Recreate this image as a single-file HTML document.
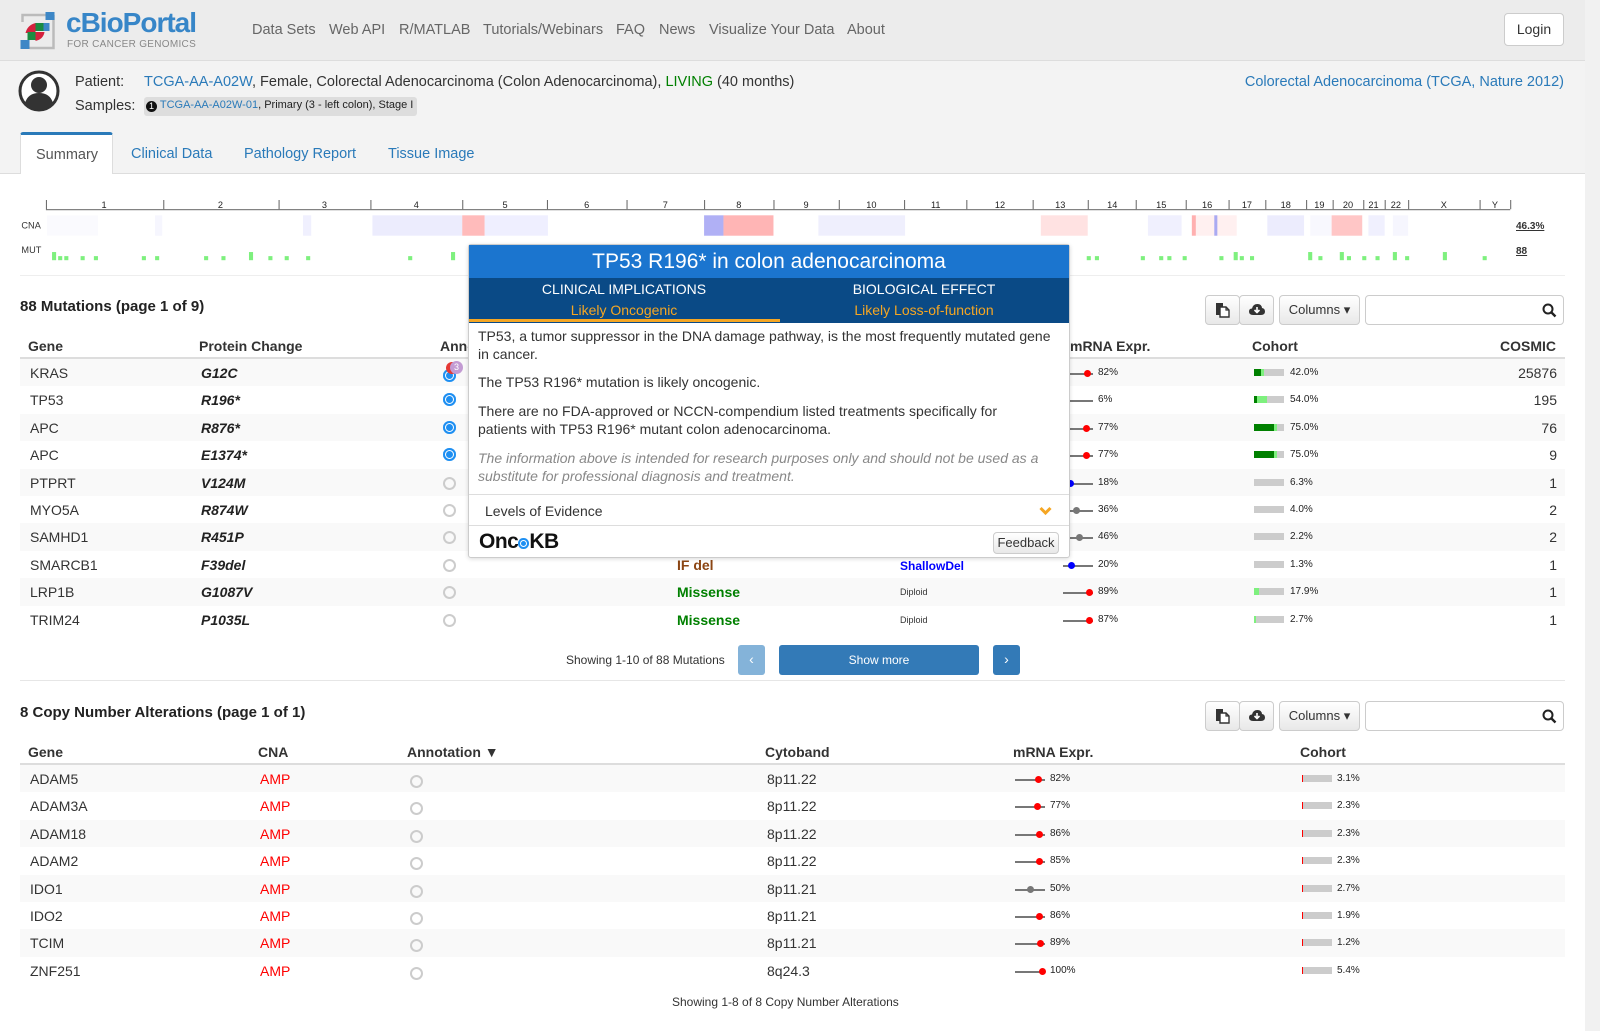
<!DOCTYPE html>
<html><head><meta charset="utf-8"><style>
*{box-sizing:border-box}
body{margin:0;width:1600px;height:1031px;overflow:hidden;font-family:"Liberation Sans",Arial,sans-serif;font-size:14px;color:#333;background:#fff;position:relative}
.a{position:absolute;white-space:nowrap}
a,.lk{color:#2a7ab9;text-decoration:none}
.hdr{left:0;top:0;width:1585px;height:61px;background:#ececec;border-bottom:1px solid #ddd}
.nav{top:22px;font-size:14.5px;color:#666}
.pat{left:0;top:61px;width:1585px;height:112px;background:#f3f3f3}
.tabline{left:0;top:173px;width:1585px;height:1px;background:#ddd}
.sb{left:1585px;top:0;width:15px;height:1031px;background:#f1f1f1}
.tick{position:absolute;top:196px;width:1px;height:9px;background:#666}
.cl{position:absolute;top:196px;font-size:9px;color:#222;transform:translateX(-50%)}
.cn{position:absolute;top:211px;height:20px}
.mb{position:absolute;background:#7ef07e;width:4px}
h3{margin:0;font-size:15px;font-weight:bold;color:#222}
.th{font-weight:bold;font-size:14px;color:#333}
.row{position:absolute;left:20px;width:1545px;height:27.4px}
.row.s{background:#f9f9f9}
.row .c{position:absolute;top:6px;white-space:nowrap}
.pc{font-weight:bold;font-style:italic;color:#222}
.circ{position:absolute;width:13px;height:13px;border:2px solid #ccc;border-radius:50%}
.onc{position:absolute;width:13px;height:13px;border-radius:50%;background:#1e8ff2;box-shadow:inset 0 0 0 2px #1e8ff2,inset 0 0 0 3px #fff,inset 0 0 0 5px #1e8ff2}
.ml{position:absolute;height:2px;background:#777;width:30px}
.md{position:absolute;width:7px;height:7px;border-radius:50%}
.mt{position:absolute;font-size:10px;color:#222}
.cb{position:absolute;width:30px;height:7px;background:#ccc}
.ct{position:absolute;font-size:10px;color:#222}
.btn{position:absolute;border:1px solid #ccc;border-radius:4px;background:linear-gradient(#fff,#e8e8e8);height:30px}
.srch{position:absolute;border:1px solid #ccc;border-radius:4px;background:#fff;height:30px;width:199px}
.mis{color:#008000;font-weight:bold}
</style></head><body>

<div class="a hdr"></div>
<svg class="a" style="left:19px;top:11px" width="39" height="40" viewBox="0 0 38 40">
<path d="M3 11 V4 H34" fill="none" stroke="#bbb" stroke-width="2.5"/>
<path d="M34 4 V37 H10" fill="none" stroke="#bbb" stroke-width="2.5"/>
<rect x="26" y="1" width="9" height="8" fill="#3d87c6"/>
<path d="M6 22 Q8 14 16 12 V22 Z" fill="#d4213d"/>
<rect x="16" y="12" width="8" height="8" fill="#1a8c42"/>
<rect x="24" y="12" width="6" height="8" fill="#3d87c6"/>
<rect x="8" y="21" width="8" height="8" fill="#1a8c42"/>
<path d="M16 21 H25 Q24 28 16 30 Z" fill="#d4213d"/>
<rect x="1" y="29" width="9" height="9" fill="#3d87c6"/>
</svg>
<div class="a" style="left:66px;top:7px;font-size:28px;font-weight:bold;color:#3786c8;letter-spacing:-1px">cBioPortal</div>
<div class="a" style="left:67px;top:39px;font-size:10px;color:#888;letter-spacing:.3px">FOR CANCER GENOMICS</div>
<div class="a nav" style="left:252px">Data Sets</div>
<div class="a nav" style="left:329px">Web API</div>
<div class="a nav" style="left:399px">R/MATLAB</div>
<div class="a nav" style="left:483px">Tutorials/Webinars</div>
<div class="a nav" style="left:616px">FAQ</div>
<div class="a nav" style="left:659px">News</div>
<div class="a nav" style="left:709px">Visualize Your Data</div>
<div class="a nav" style="left:847px">About</div>
<div class="a btn" style="left:1504px;top:13px;width:60px;height:33px;font-size:14px;text-align:center;line-height:31px;background:#fff">Login</div>

<div class="a pat"></div>
<svg class="a" style="left:18px;top:70px" width="42" height="42" viewBox="0 0 42 42"><circle cx="21" cy="21" r="19" fill="#fff" stroke="#333" stroke-width="3"/><circle cx="21" cy="15" r="8" fill="#333"/><path d="M7 33 Q10 23 21 23 Q32 23 35 33 Q29 40 21 40 Q13 40 7 33Z" fill="#333"/></svg>
<div class="a" style="left:75px;top:74px;font-size:14.5px">Patient:</div>
<div class="a" style="left:144px;top:74px;font-size:14.5px"><span class="lk">TCGA-AA-A02W</span>, Female, Colorectal Adenocarcinoma (Colon Adenocarcinoma), <span style="color:#008000">LIVING</span> (40 months)</div>
<div class="a" style="left:75px;top:98px;font-size:14.5px">Samples:</div>
<div class="a" style="left:144px;top:97px;height:19px;background:#ddd;border-radius:3px;padding:2px 4px 0 2px;font-size:11px;color:#222"><span style="display:inline-block;width:11px;height:11px;border-radius:50%;background:#111;color:#fff;font-size:9px;text-align:center;line-height:11px;vertical-align:-1px">1</span> <span class="lk">TCGA-AA-A02W-01</span>, Primary (3 - left colon), Stage I</div>
<div class="a lk" style="right:36px;top:74px;font-size:14.5px">Colorectal Adenocarcinoma (TCGA, Nature 2012)</div>

<div class="a tabline"></div>
<div class="a" style="left:20px;top:132px;width:93px;height:42px;background:#fff;border:1px solid #ddd;border-top:3px solid #2a7ab9;border-bottom:none;border-radius:3px 3px 0 0"></div>
<div class="a" style="left:36px;top:147px;font-size:14.5px;color:#555">Summary</div>
<div class="a lk" style="left:131px;top:146px;font-size:14.5px">Clinical Data</div>
<div class="a lk" style="left:244px;top:146px;font-size:14.5px">Pathology Report</div>
<div class="a lk" style="left:388px;top:146px;font-size:14.5px">Tissue Image</div>

<!-- genome -->
<div style="position:absolute;left:0;top:0;width:1568px;height:300px;transform:scale(1.0204);transform-origin:0 0">
<div class="a" style="left:45px;top:205px;width:1435px;height:1px;background:#666"></div>
<div class="tick" style="left:45px"></div><div class="tick" style="left:160px"></div><div class="tick" style="left:273px"></div><div class="tick" style="left:363px"></div><div class="tick" style="left:453px"></div><div class="tick" style="left:536px"></div><div class="tick" style="left:614px"></div><div class="tick" style="left:690px"></div><div class="tick" style="left:758px"></div><div class="tick" style="left:822px"></div><div class="tick" style="left:886px"></div><div class="tick" style="left:947px"></div><div class="tick" style="left:1012px"></div><div class="tick" style="left:1066px"></div><div class="tick" style="left:1113px"></div><div class="tick" style="left:1162px"></div><div class="tick" style="left:1204px"></div><div class="tick" style="left:1240px"></div><div class="tick" style="left:1280px"></div><div class="tick" style="left:1306px"></div><div class="tick" style="left:1336px"></div><div class="tick" style="left:1357px"></div><div class="tick" style="left:1380px"></div><div class="tick" style="left:1450px"></div><div class="tick" style="left:1480px"></div>
<div class="cl" style="left:102px">1</div><div class="cl" style="left:216px">2</div><div class="cl" style="left:318px">3</div><div class="cl" style="left:408px">4</div><div class="cl" style="left:495px">5</div><div class="cl" style="left:575px">6</div><div class="cl" style="left:652px">7</div><div class="cl" style="left:724px">8</div><div class="cl" style="left:790px">9</div><div class="cl" style="left:854px">10</div><div class="cl" style="left:917px">11</div><div class="cl" style="left:980px">12</div><div class="cl" style="left:1039px">13</div><div class="cl" style="left:1090px">14</div><div class="cl" style="left:1138px">15</div><div class="cl" style="left:1183px">16</div><div class="cl" style="left:1222px">17</div><div class="cl" style="left:1260px">18</div><div class="cl" style="left:1293px">19</div><div class="cl" style="left:1321px">20</div><div class="cl" style="left:1346px">21</div><div class="cl" style="left:1368px">22</div><div class="cl" style="left:1415px">X</div><div class="cl" style="left:1465px">Y</div>
<div class="a" style="left:21px;top:216px;font-size:9px">CNA</div>
<div class="a" style="left:21px;top:240px;font-size:9px">MUT</div>
<div class="cn" style="left:46px;width:50px;background:#fafafe"></div>
<div class="cn" style="left:152px;width:7px;background:#f6f6fe"></div>
<div class="cn" style="left:297px;width:8px;background:#f0f0fe"></div>
<div class="cn" style="left:365px;width:88px;background:#ececfd"></div>
<div class="cn" style="left:453px;width:22px;background:#ffbbbb"></div>
<div class="cn" style="left:475px;width:62px;background:#efefff"></div>
<div class="cn" style="left:690px;width:19px;background:#b0b0f5"></div>
<div class="cn" style="left:709px;width:49px;background:#ffb5b5"></div>
<div class="cn" style="left:802px;width:85px;background:#efeffd"></div>
<div class="cn" style="left:1020px;width:46px;background:#ffe2e2"></div>
<div class="cn" style="left:1125px;width:33px;background:#f0f0fe"></div>
<div class="cn" style="left:1168px;width:4px;background:#ffb0b0"></div>
<div class="cn" style="left:1172px;width:40px;background:#fff0f0"></div>
<div class="cn" style="left:1190px;width:3px;background:#aaaaf2"></div>
<div class="cn" style="left:1242px;width:36px;background:#ececfd"></div>
<div class="cn" style="left:1284px;width:21px;background:#f8f8fe"></div>
<div class="cn" style="left:1305px;width:30px;background:#ffc6c6"></div>
<div class="cn" style="left:1341px;width:16px;background:#f0f0fe"></div>
<div class="cn" style="left:1365px;width:15px;background:#f6f6fe"></div>
<div class="mb" style="left:51px;top:247px;height:8px"></div><div class="mb" style="left:57px;top:251px;height:4px"></div><div class="mb" style="left:63px;top:251px;height:4px"></div><div class="mb" style="left:79px;top:251px;height:4px"></div><div class="mb" style="left:92px;top:251px;height:4px"></div><div class="mb" style="left:139px;top:251px;height:4px"></div><div class="mb" style="left:152px;top:251px;height:4px"></div><div class="mb" style="left:200px;top:251px;height:4px"></div><div class="mb" style="left:217px;top:251px;height:4px"></div><div class="mb" style="left:244px;top:247px;height:8px"></div><div class="mb" style="left:263px;top:251px;height:4px"></div><div class="mb" style="left:279px;top:251px;height:4px"></div><div class="mb" style="left:300px;top:251px;height:4px"></div><div class="mb" style="left:400px;top:251px;height:4px"></div><div class="mb" style="left:442px;top:247px;height:8px"></div>
<div class="mb" style="left:1065px;top:251px;height:4px"></div><div class="mb" style="left:1073px;top:251px;height:4px"></div><div class="mb" style="left:1118px;top:251px;height:4px"></div><div class="mb" style="left:1136px;top:251px;height:4px"></div><div class="mb" style="left:1144px;top:251px;height:4px"></div><div class="mb" style="left:1159px;top:251px;height:4px"></div><div class="mb" style="left:1195px;top:251px;height:4px"></div><div class="mb" style="left:1209px;top:247px;height:8px"></div><div class="mb" style="left:1215px;top:251px;height:4px"></div><div class="mb" style="left:1225px;top:251px;height:4px"></div><div class="mb" style="left:1282px;top:247px;height:8px"></div><div class="mb" style="left:1292px;top:251px;height:4px"></div><div class="mb" style="left:1313px;top:247px;height:8px"></div><div class="mb" style="left:1320px;top:251px;height:4px"></div><div class="mb" style="left:1335px;top:251px;height:4px"></div><div class="mb" style="left:1348px;top:251px;height:4px"></div><div class="mb" style="left:1365px;top:247px;height:8px"></div><div class="mb" style="left:1377px;top:251px;height:4px"></div><div class="mb" style="left:1414px;top:247px;height:8px"></div><div class="mb" style="left:1453px;top:251px;height:4px"></div>
</div>
<div class="a" style="left:1516px;top:221px;font-size:10px;font-weight:bold;text-decoration:underline">46.3%</div>
<div class="a" style="left:1516px;top:246px;font-size:10px;font-weight:bold;text-decoration:underline">88</div>
<div class="a" style="left:20px;top:275px;width:1545px;height:1px;background:#eee"></div>

<!-- mutations -->
<div class="a" style="left:20px;top:298px"><h3>88 Mutations (page 1 of 9)</h3></div>
<div class="btn" style="left:1205px;top:295px;width:35px"></div><div class="btn" style="left:1239px;top:295px;width:35px"></div>
<svg class="a" style="left:1215px;top:302px" width="15" height="16" viewBox="0 0 15 16"><path d="M1 1 H8 V13 H1Z" fill="#333"/><path d="M5 5 H11 L14 8 V15 H5Z" fill="#fff" stroke="#333" stroke-width="1.4"/><path d="M11 5 V8 H14" fill="none" stroke="#333" stroke-width="1.2"/></svg>
<svg class="a" style="left:1249px;top:303px" width="16" height="13" viewBox="0 0 16 13"><path d="M4 12 Q0 12 0 8.5 Q0 5.5 3 5.5 Q4 1 8.5 1 Q12.5 1 13 5 Q16 5.5 16 8.5 Q16 12 12 12Z" fill="#333"/><path d="M8 4 V9 M5.5 7 L8 9.5 L10.5 7" stroke="#fff" stroke-width="1.6" fill="none"/></svg>
<div class="btn" style="left:1279px;top:295px;width:81px;text-align:center;line-height:28px;font-size:13px">Columns &#9662;</div>
<div class="srch" style="left:1365px;top:295px"></div>
<svg class="a" style="left:1542px;top:303px" width="15" height="15" viewBox="0 0 15 15"><circle cx="6" cy="6" r="4.5" fill="none" stroke="#222" stroke-width="2"/><path d="M9.5 9.5 L13.5 13.5" stroke="#222" stroke-width="2.4"/></svg>

<div class="a th" style="left:28px;top:338px">Gene</div>
<div class="a th" style="left:199px;top:338px">Protein Change</div>
<div class="a th" style="left:440px;top:338px">Anno</div>
<div class="a th" style="left:1070px;top:338px">mRNA Expr.</div>
<div class="a th" style="left:1252px;top:338px">Cohort</div>
<div class="a th" style="right:44px;top:338px">COSMIC</div>
<div class="a" style="left:20px;top:357px;width:1545px;height:2px;background:#ddd"></div>

<div style="position:absolute;left:0;top:359px">
<div class="row s" style="top:0"><div class="c" style="left:10px">KRAS</div><div class="c pc" style="left:181px">G12C</div><div class="onc" style="left:423px;top:10px"></div><div style="position:absolute;left:426px;top:3px;width:12px;height:12px;border-radius:50%;background:#e53935"></div><div style="position:absolute;left:430px;top:2px;width:13px;height:13px;border-radius:50%;background:#c39bd3;color:#fff;font-size:9px;text-align:center;line-height:13px">3</div><div class="ml" style="left:1043px;top:14px"></div><div class="md" style="left:1064px;top:11px;background:red"></div><div class="mt" style="left:1078px;top:8px">82%</div><div class="cb" style="left:1234px;top:10px"></div><div style="position:absolute;left:1234px;top:10px;width:7px;height:7px;background:#008000"></div><div style="position:absolute;left:1241px;top:10px;width:3px;height:7px;background:#7ef07e"></div><div class="ct" style="left:1270px;top:8px">42.0%</div><div class="c" style="right:8px;left:auto">25876</div></div>
<div class="row" style="top:27.4px"><div class="c" style="left:10px">TP53</div><div class="c pc" style="left:181px">R196*</div><div class="onc" style="left:423px;top:7px"></div><div class="ml" style="left:1043px;top:14px"></div><div class="md" style="left:1043px;top:11px;background:#00f"></div><div class="mt" style="left:1078px;top:8px">6%</div><div class="cb" style="left:1234px;top:10px"></div><div style="position:absolute;left:1234px;top:10px;width:3px;height:7px;background:#008000"></div><div style="position:absolute;left:1237px;top:10px;width:10px;height:7px;background:#7ef07e"></div><div class="ct" style="left:1270px;top:8px">54.0%</div><div class="c" style="right:8px;left:auto">195</div></div>
<div class="row s" style="top:54.8px"><div class="c" style="left:10px">APC</div><div class="c pc" style="left:181px">R876*</div><div class="onc" style="left:423px;top:7px"></div><div class="ml" style="left:1043px;top:14px"></div><div class="md" style="left:1063px;top:11px;background:red"></div><div class="mt" style="left:1078px;top:8px">77%</div><div class="cb" style="left:1234px;top:10px"></div><div style="position:absolute;left:1234px;top:10px;width:20px;height:7px;background:#008000"></div><div style="position:absolute;left:1254px;top:10px;width:3px;height:7px;background:#7ef07e"></div><div class="ct" style="left:1270px;top:8px">75.0%</div><div class="c" style="right:8px;left:auto">76</div></div>
<div class="row" style="top:82.2px"><div class="c" style="left:10px">APC</div><div class="c pc" style="left:181px">E1374*</div><div class="onc" style="left:423px;top:7px"></div><div class="ml" style="left:1043px;top:14px"></div><div class="md" style="left:1063px;top:11px;background:red"></div><div class="mt" style="left:1078px;top:8px">77%</div><div class="cb" style="left:1234px;top:10px"></div><div style="position:absolute;left:1234px;top:10px;width:20px;height:7px;background:#008000"></div><div style="position:absolute;left:1254px;top:10px;width:3px;height:7px;background:#7ef07e"></div><div class="ct" style="left:1270px;top:8px">75.0%</div><div class="c" style="right:8px;left:auto">9</div></div>
<div class="row s" style="top:109.6px"><div class="c" style="left:10px">PTPRT</div><div class="c pc" style="left:181px">V124M</div><div class="circ" style="left:423px;top:8px"></div><div class="ml" style="left:1043px;top:14px"></div><div class="md" style="left:1047px;top:11px;background:#00f"></div><div class="mt" style="left:1078px;top:8px">18%</div><div class="cb" style="left:1234px;top:10px"></div><div class="ct" style="left:1270px;top:8px">6.3%</div><div class="c" style="right:8px;left:auto">1</div></div>
<div class="row" style="top:137px"><div class="c" style="left:10px">MYO5A</div><div class="c pc" style="left:181px">R874W</div><div class="circ" style="left:423px;top:8px"></div><div class="ml" style="left:1043px;top:14px"></div><div class="md" style="left:1053px;top:11px;background:#777"></div><div class="mt" style="left:1078px;top:8px">36%</div><div class="cb" style="left:1234px;top:10px"></div><div class="ct" style="left:1270px;top:8px">4.0%</div><div class="c" style="right:8px;left:auto">2</div></div>
<div class="row s" style="top:164.4px"><div class="c" style="left:10px">SAMHD1</div><div class="c pc" style="left:181px">R451P</div><div class="circ" style="left:423px;top:8px"></div><div class="ml" style="left:1043px;top:14px"></div><div class="md" style="left:1056px;top:11px;background:#777"></div><div class="mt" style="left:1078px;top:8px">46%</div><div class="cb" style="left:1234px;top:10px"></div><div class="ct" style="left:1270px;top:8px">2.2%</div><div class="c" style="right:8px;left:auto">2</div></div>
<div class="row" style="top:191.8px"><div class="c" style="left:10px">SMARCB1</div><div class="c pc" style="left:181px">F39del</div><div class="circ" style="left:423px;top:8px"></div><div class="c" style="left:657px;color:#8b4513;font-weight:bold">IF del</div><div class="c" style="left:880px;top:8px;color:#00f;font-weight:bold;font-size:12px">ShallowDel</div><div class="ml" style="left:1043px;top:14px"></div><div class="md" style="left:1048px;top:11px;background:#00f"></div><div class="mt" style="left:1078px;top:8px">20%</div><div class="cb" style="left:1234px;top:10px"></div><div class="ct" style="left:1270px;top:8px">1.3%</div><div class="c" style="right:8px;left:auto">1</div></div>
<div class="row s" style="top:219.2px"><div class="c" style="left:10px">LRP1B</div><div class="c pc" style="left:181px">G1087V</div><div class="circ" style="left:423px;top:8px"></div><div class="c mis" style="left:657px">Missense</div><div class="c" style="left:880px;top:9px;font-size:9px">Diploid</div><div class="ml" style="left:1043px;top:14px"></div><div class="md" style="left:1066px;top:11px;background:red"></div><div class="mt" style="left:1078px;top:8px">89%</div><div class="cb" style="left:1234px;top:10px"></div><div style="position:absolute;left:1234px;top:10px;width:5px;height:7px;background:#7ef07e"></div><div class="ct" style="left:1270px;top:8px">17.9%</div><div class="c" style="right:8px;left:auto">1</div></div>
<div class="row" style="top:246.6px"><div class="c" style="left:10px">TRIM24</div><div class="c pc" style="left:181px">P1035L</div><div class="circ" style="left:423px;top:8px"></div><div class="c mis" style="left:657px">Missense</div><div class="c" style="left:880px;top:9px;font-size:9px">Diploid</div><div class="ml" style="left:1043px;top:14px"></div><div class="md" style="left:1066px;top:11px;background:red"></div><div class="mt" style="left:1078px;top:8px">87%</div><div class="cb" style="left:1234px;top:10px"></div><div style="position:absolute;left:1234px;top:10px;width:2px;height:7px;background:#7ef07e"></div><div class="ct" style="left:1270px;top:8px">2.7%</div><div class="c" style="right:8px;left:auto">1</div></div>
</div>

<div class="a" style="left:566px;top:653px;font-size:12px;color:#333">Showing 1-10 of 88 Mutations</div>
<div class="a" style="left:738px;top:645px;width:27px;height:30px;background:#84b3d9;border-radius:3px;color:#fff;text-align:center;line-height:29px">&#8249;</div>
<div class="a" style="left:779px;top:645px;width:200px;height:30px;background:#337ab7;border-radius:3px;color:#fff;text-align:center;line-height:30px;font-size:12px">Show more</div>
<div class="a" style="left:993px;top:645px;width:27px;height:30px;background:#337ab7;border-radius:3px;color:#fff;text-align:center;line-height:29px">&#8250;</div>
<div class="a" style="left:20px;top:680px;width:1545px;height:1px;background:#e6e6e6"></div>

<!-- CNA -->
<div class="a" style="left:20px;top:704px"><h3>8 Copy Number Alterations (page 1 of 1)</h3></div>
<div class="btn" style="left:1205px;top:701px;width:35px"></div><div class="btn" style="left:1239px;top:701px;width:35px"></div>
<svg class="a" style="left:1215px;top:708px" width="15" height="16" viewBox="0 0 15 16"><path d="M1 1 H8 V13 H1Z" fill="#333"/><path d="M5 5 H11 L14 8 V15 H5Z" fill="#fff" stroke="#333" stroke-width="1.4"/><path d="M11 5 V8 H14" fill="none" stroke="#333" stroke-width="1.2"/></svg>
<svg class="a" style="left:1249px;top:709px" width="16" height="13" viewBox="0 0 16 13"><path d="M4 12 Q0 12 0 8.5 Q0 5.5 3 5.5 Q4 1 8.5 1 Q12.5 1 13 5 Q16 5.5 16 8.5 Q16 12 12 12Z" fill="#333"/><path d="M8 4 V9 M5.5 7 L8 9.5 L10.5 7" stroke="#fff" stroke-width="1.6" fill="none"/></svg>
<div class="btn" style="left:1279px;top:701px;width:81px;text-align:center;line-height:28px;font-size:13px">Columns &#9662;</div>
<div class="srch" style="left:1365px;top:701px"></div>
<svg class="a" style="left:1542px;top:709px" width="15" height="15" viewBox="0 0 15 15"><circle cx="6" cy="6" r="4.5" fill="none" stroke="#222" stroke-width="2"/><path d="M9.5 9.5 L13.5 13.5" stroke="#222" stroke-width="2.4"/></svg>

<div class="a th" style="left:28px;top:744px">Gene</div>
<div class="a th" style="left:258px;top:744px">CNA</div>
<div class="a th" style="left:407px;top:744px">Annotation &#9660;</div>
<div class="a th" style="left:765px;top:744px">Cytoband</div>
<div class="a th" style="left:1013px;top:744px">mRNA Expr.</div>
<div class="a th" style="left:1300px;top:744px">Cohort</div>
<div class="a" style="left:20px;top:763px;width:1545px;height:2px;background:#ddd"></div>

<div style="position:absolute;left:0;top:765px">
<div class="row s" style="top:0"><div class="c" style="left:10px">ADAM5</div><div class="c" style="left:240px;color:red">AMP</div><div class="circ" style="left:390px;top:10px"></div><div class="c" style="left:747px">8p11.22</div><div class="ml" style="left:995px;top:14px"></div><div class="md" style="left:1015px;top:11px;background:red"></div><div class="mt" style="left:1030px;top:8px">82%</div><div class="cb" style="left:1282px;top:10px"></div><div style="position:absolute;left:1282px;top:10px;width:1px;height:7px;background:red"></div><div class="ct" style="left:1317px;top:8px">3.1%</div></div>
<div class="row" style="top:27.4px"><div class="c" style="left:10px">ADAM3A</div><div class="c" style="left:240px;color:red">AMP</div><div class="circ" style="left:390px;top:10px"></div><div class="c" style="left:747px">8p11.22</div><div class="ml" style="left:995px;top:14px"></div><div class="md" style="left:1014px;top:11px;background:red"></div><div class="mt" style="left:1030px;top:8px">77%</div><div class="cb" style="left:1282px;top:10px"></div><div style="position:absolute;left:1282px;top:10px;width:1px;height:7px;background:red"></div><div class="ct" style="left:1317px;top:8px">2.3%</div></div>
<div class="row s" style="top:54.8px"><div class="c" style="left:10px">ADAM18</div><div class="c" style="left:240px;color:red">AMP</div><div class="circ" style="left:390px;top:10px"></div><div class="c" style="left:747px">8p11.22</div><div class="ml" style="left:995px;top:14px"></div><div class="md" style="left:1016px;top:11px;background:red"></div><div class="mt" style="left:1030px;top:8px">86%</div><div class="cb" style="left:1282px;top:10px"></div><div style="position:absolute;left:1282px;top:10px;width:1px;height:7px;background:red"></div><div class="ct" style="left:1317px;top:8px">2.3%</div></div>
<div class="row" style="top:82.2px"><div class="c" style="left:10px">ADAM2</div><div class="c" style="left:240px;color:red">AMP</div><div class="circ" style="left:390px;top:10px"></div><div class="c" style="left:747px">8p11.22</div><div class="ml" style="left:995px;top:14px"></div><div class="md" style="left:1016px;top:11px;background:red"></div><div class="mt" style="left:1030px;top:8px">85%</div><div class="cb" style="left:1282px;top:10px"></div><div style="position:absolute;left:1282px;top:10px;width:1px;height:7px;background:red"></div><div class="ct" style="left:1317px;top:8px">2.3%</div></div>
<div class="row s" style="top:109.6px"><div class="c" style="left:10px">IDO1</div><div class="c" style="left:240px;color:red">AMP</div><div class="circ" style="left:390px;top:10px"></div><div class="c" style="left:747px">8p11.21</div><div class="ml" style="left:995px;top:14px"></div><div class="md" style="left:1007px;top:11px;background:#777"></div><div class="mt" style="left:1030px;top:8px">50%</div><div class="cb" style="left:1282px;top:10px"></div><div style="position:absolute;left:1282px;top:10px;width:1px;height:7px;background:red"></div><div class="ct" style="left:1317px;top:8px">2.7%</div></div>
<div class="row" style="top:137px"><div class="c" style="left:10px">IDO2</div><div class="c" style="left:240px;color:red">AMP</div><div class="circ" style="left:390px;top:10px"></div><div class="c" style="left:747px">8p11.21</div><div class="ml" style="left:995px;top:14px"></div><div class="md" style="left:1016px;top:11px;background:red"></div><div class="mt" style="left:1030px;top:8px">86%</div><div class="cb" style="left:1282px;top:10px"></div><div style="position:absolute;left:1282px;top:10px;width:1px;height:7px;background:red"></div><div class="ct" style="left:1317px;top:8px">1.9%</div></div>
<div class="row s" style="top:164.4px"><div class="c" style="left:10px">TCIM</div><div class="c" style="left:240px;color:red">AMP</div><div class="circ" style="left:390px;top:10px"></div><div class="c" style="left:747px">8p11.21</div><div class="ml" style="left:995px;top:14px"></div><div class="md" style="left:1017px;top:11px;background:red"></div><div class="mt" style="left:1030px;top:8px">89%</div><div class="cb" style="left:1282px;top:10px"></div><div style="position:absolute;left:1282px;top:10px;width:1px;height:7px;background:red"></div><div class="ct" style="left:1317px;top:8px">1.2%</div></div>
<div class="row" style="top:191.8px"><div class="c" style="left:10px">ZNF251</div><div class="c" style="left:240px;color:red">AMP</div><div class="circ" style="left:390px;top:10px"></div><div class="c" style="left:747px">8q24.3</div><div class="ml" style="left:995px;top:14px"></div><div class="md" style="left:1019px;top:11px;background:red"></div><div class="mt" style="left:1030px;top:8px">100%</div><div class="cb" style="left:1282px;top:10px"></div><div style="position:absolute;left:1282px;top:10px;width:1px;height:7px;background:red"></div><div class="ct" style="left:1317px;top:8px">5.4%</div></div>
</div>
<div class="a" style="left:672px;top:995px;font-size:12px">Showing 1-8 of 8 Copy Number Alterations</div>

<!-- tooltip -->
<div class="a" style="left:468px;top:244px;width:602px;height:314px;background:#fff;border:1px solid #ccc;border-radius:3px;box-shadow:0 1px 4px rgba(0,0,0,.15)"></div>
<div class="a" style="left:469px;top:245px;width:600px;height:33px;background:#1b75cf;color:#fff;font-size:21px;text-align:center;line-height:33px">TP53 R196* in colon adenocarcinoma</div>
<div class="a" style="left:469px;top:278px;width:600px;height:45px;background:#0a4a86"></div>
<div class="a" style="left:469px;top:281px;width:310px;text-align:center;color:#fff;font-size:14px">CLINICAL IMPLICATIONS</div>
<div class="a" style="left:469px;top:302px;width:310px;text-align:center;color:#f5a623;font-size:14px">Likely Oncogenic</div>
<div class="a" style="left:779px;top:281px;width:290px;text-align:center;color:#fff;font-size:14px">BIOLOGICAL EFFECT</div>
<div class="a" style="left:779px;top:302px;width:290px;text-align:center;color:#f5a623;font-size:14px">Likely Loss-of-function</div>
<div class="a" style="left:469px;top:319px;width:311px;height:3px;background:#f5a623"></div>
<div class="a" style="left:478px;top:327px;width:575px;white-space:normal;font-size:14px;line-height:18px;color:#333">TP53, a tumor suppressor in the DNA damage pathway, is the most frequently mutated gene in cancer.</div>
<div class="a" style="left:478px;top:374px;font-size:14px">The TP53 R196* mutation is likely oncogenic.</div>
<div class="a" style="left:478px;top:402px;width:560px;white-space:normal;font-size:14px;line-height:18px">There are no FDA-approved or NCCN-compendium listed treatments specifically for patients with TP53 R196* mutant colon adenocarcinoma.</div>
<div class="a" style="left:478px;top:449px;width:588px;white-space:normal;font-size:14px;line-height:18px;font-style:italic;color:#888">The information above is intended for research purposes only and should not be used as a substitute for professional diagnosis and treatment.</div>
<div class="a" style="left:469px;top:494px;width:600px;height:1px;background:#ddd"></div>
<div class="a" style="left:485px;top:503px;font-size:14px">Levels of Evidence</div>
<svg class="a" style="left:1039px;top:506px" width="13" height="10" viewBox="0 0 13 10"><path d="M1.5 2 L6.5 7 L11.5 2" fill="none" stroke="#f5a623" stroke-width="3"/></svg>
<div class="a" style="left:469px;top:525px;width:600px;height:1px;background:#ddd"></div>
<div class="a" style="left:479px;top:530px;font-size:21px;font-weight:bold;color:#111;letter-spacing:-.5px">Onc<span style="display:inline-block;width:11px;height:11px;border-radius:50%;background:#1e8ff2;box-shadow:inset 0 0 0 2px #1e8ff2,inset 0 0 0 3px #fff;vertical-align:-1px"></span>KB</div>
<div class="a btn" style="left:993px;top:532px;width:66px;height:22px;font-size:13px;text-align:center;line-height:20px">Feedback</div>

<div class="a sb"></div>
</body></html>
